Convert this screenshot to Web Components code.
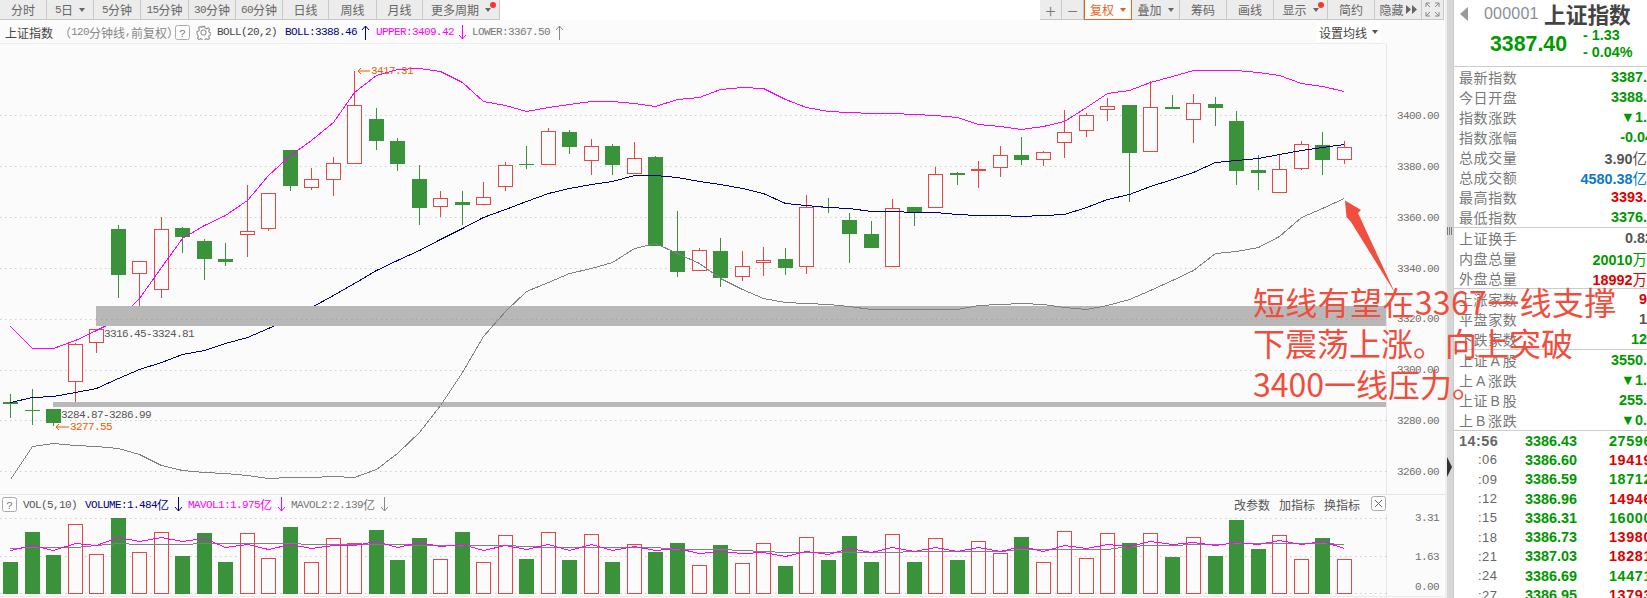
<!DOCTYPE html>
<html lang="zh"><head><meta charset="utf-8"><title>上证指数</title>
<style>html,body{margin:0;padding:0;background:#fff;overflow:hidden}body{font-family:"Noto Sans CJK SC","Liberation Sans",sans-serif}</style>
</head><body>
<tdx-app></tdx-app>
<script>
const CJK='"Noto Sans CJK SC","Liberation Sans",sans-serif';
const mx=t=>t.replace(/[\x21-\x7e]+/g,m=>`<span class="m">${m}</span>`);
const MONO=`.m{font-family:"Liberation Mono",monospace;font-size:11px;letter-spacing:-.6px}`;
function def(name,css,render){
  customElements.define(name,class extends HTMLElement{
    connectedCallback(){
      if(this.shadowRoot)return;
      const s=this.attachShadow({mode:'open'});
      s.innerHTML=`<style>${css}${MONO}</style>`+render(this);
    }
  });
}
/* data: type g/r, bodyTop, bodyBottom, wickTop, wickBottom, volTop */
const K=[
['g',402,404,394,418,562],['g',410,411,389,425,532],['g',409,423,409,426,555],['r',344,382,343,402,524],['r',329,343,329,353,554],
['g',229,275,225,298,518],['r',261,274,261,306,552],['r',229,290,217,298,532],['g',228,237,227,253,556],['g',241,259,239,280,533],
['g',259,262,243,266,562],['r',231,235,185,257,533],['r',193,229,193,231,558],['g',150,186,150,191,527],['r',179,188,168,190,562],
['r',163,180,157,196,538],['r',105,164,71,164,543],['g',119,141,108,150,530],['g',141,164,138,171,560],['g',179,208,165,225,538],
['r',198,207,191,217,559],['g',202,205,191,225,532],['r',197,205,182,205,562],['r',165,187,162,191,535],['g',164,165,146,169,559],
['r',131,165,128,165,532],['g',132,147,130,154,560],['r',146,161,139,175,534],['g',146,165,144,175,562],['r',158,174,142,174,544],
['g',157,246,156,246,552],['g',251,272,211,277,543],['r',250,271,248,271,565],['g',251,278,238,287,545],['r',266,277,251,281,563],
['r',260,263,247,276,543],['g',259,268,248,275,566],['r',207,267,195,274,537],['g',207,208,198,213,560],['g',220,234,213,263,536],
['g',234,248,221,248,562],['r',208,267,199,267,534],['g',207,212,207,226,562],['r',174,208,167,208,538],['g',173,175,172,185,560],
['f',169,171,161,188,541],['r',155,168,146,177,553],['g',155,160,137,165,537],['r',152,160,151,166,562],['r',132,143,110,158,531],
['r',115,131,113,137,558],['r',106,110,98,121,533],['g',105,153,105,202,543],['r',107,152,81,152,533],['g',107,109,95,109,557],
['r',103,120,94,143,537],['g',104,108,97,126,556],['g',121,171,111,185,520],['g',170,173,155,190,549],['r',169,193,154,193,535],
['r',144,169,141,170,559],['g',145,160,132,175,538],['r',147,160,141,164,559]];
const UP=[326,348,348,340,330,319,298,267,238,225,215,200,175,155,140,122,92,75,69,68,71,82,101,105,111,107,104,101,101,103,106,99,97,89,87,88,99,107,111,112,113,113,114,115,117,124,126,129,126,121,107,93,90,82,76,70,70,70,72,75,83,86,91];
const MID=[402,397,396,392,388,378,369,362,354,350,343,337,328,318,307,295,283,270,260,250,239,228,217,209,201,193,188,184,181,175,175,177,181,184,188,193,203,205,207,208,211,211,212,212,214,215,215,216,215,214,207,199,194,186,179,172,162,160,158,154,150,147,144];
const LOW=[479,446,443,445,446,448,454,465,470,472,473,475,478,477,477,476,477,469,453,432,405,372,336,311,291,282,273,268,262,248,243,253,263,278,289,298,302,303,304,306,309,309,309,309,309,305,304,303,304,307,309,305,299,290,280,270,253,251,247,236,217,208,198];
const M1=[550,545,550,543,545,537,541,537,541,538,547,544,549,544,548,545,545,541,547,542,546,544,550,545,549,544,550,544,550,546,550,548,553,551,553,552,556,551,554,548,552,547,551,547,551,547,551,546,551,545,548,544,546,541,544,542,545,542,544,540,544,541,548];
const M2=[548,547,547,547,545,543,544,544,544,543,543,543,543,543,544,544,544,544,544,545,545,545,545,545,546,547,547,547,547,547,547,549,549,549,550,551,552,552,552,552,552,552,551,551,551,551,551,549,549,549,549,549,546,545,545,544,544,543,543,543,543,543,544];
const cx=i=>Math.floor(10.5+21.516*i);
const pts=a=>a.map((y,i)=>`${cx(i)+.5},${y+.5}`).join(' ');
const G='#3a923a',R='#e94545',BG='#fbfbfb';
const grid=(ys)=>ys.map(y=>`<line x1="0" x2="1390" y1="${y}.5" y2="${y}.5" stroke="#cfcfcf" stroke-dasharray="1.5 3.5"/>`).join('');
const candles=()=>K.map((k,i)=>{
  const x=cx(i),[t,a,b,c,d]=k,col=t==='g'?G:R;
  let s=`<line x1="${x+.5}" x2="${x+.5}" y1="${c}" y2="${d}" stroke="${col}"/>`;
  if(t==='r')s+=`<rect x="${x-6.5}" y="${a+.5}" width="14" height="${b-a-1}" fill="${BG}" stroke="${R}"/>`;
  else s+=`<rect x="${x-7}" y="${a}" width="15" height="${b-a}" fill="${col}"/>`;
  return s}).join('');
const vols=()=>K.map((k,i)=>{
  const x=cx(i),t=k[5];
  return k[0]==='g'?`<rect x="${x-7}" y="${t}" width="15" height="${594-t}" fill="${G}"/>`
   :`<rect x="${x-6.5}" y="${t+.5}" width="14" height="${594-t-1}" fill="${BG}" stroke="${R}"/>`}).join('');
const lab=(x,y,t,c='#666')=>`<text x="${x}" y="${y+4}" fill="${c}">${t}</text>`;
const arrowUp=c=>`<svg width="9" height="15" viewBox="0 0 9 15"><path d="M4.5 1v14M1 5l3.5-4L8 5" fill="none" stroke="${c}"/></svg>`;
const arrowDn=c=>`<svg width="9" height="15" viewBox="0 0 9 15"><path d="M4.5 0v14M1 10l3.5 4L8 10" fill="none" stroke="${c}"/></svg>`;
const qbox=`<svg width="15" height="15" viewBox="0 0 15 15"><rect x=".5" y=".5" width="14" height="14" rx="2" fill="#fff" stroke="#aaa"/><text x="7.5" y="11.5" text-anchor="middle" font-size="11" font-family="Liberation Mono" fill="#777">?</text></svg>`;

def('tool-tab',`:host{display:flex;align-items:center;justify-content:center;box-sizing:border-box;height:20px;background:#ececec;border-right:1px solid #c8c8c8;border-bottom:1px solid #c8c8c8;color:#666;font-size:12px;position:relative;white-space:nowrap}
:host([on]){background:#fff;border:1px solid #e8631a;border-top:0;color:#e8631a}
.big{font:300 19px/18px "Noto Sans CJK SC",sans-serif;color:#777}
.c{display:inline-block;width:0;height:0;border:3px solid transparent;border-top:4px solid currentColor;border-bottom:0;margin-left:6px}
.d{position:absolute;width:6px;height:6px;border-radius:50%;background:#f33;top:2px;right:3px}`,
 e=>{const t=e.getAttribute('t')||'';const isBig=t==='+'||t==='−';
 return `${isBig?`<span class="big">${t}</span>`:mx(t)}<slot></slot>${e.hasAttribute('c')?'<i class="c"></i>':''}${e.hasAttribute('d')?'<i class="d"></i>':''}`});

def('tool-bar',`:host{display:flex;justify-content:space-between;height:20px;width:1444px;background:#fff}
.g{display:flex}`,
 ()=>{
  const L=[['分时',47],['5日',47,1],['5分钟',47],['15分钟',48],['30分钟',47],['60分钟',47],['日线',46],['周线',48],['月线',46],['更多周期',77,1,1]];
  const Rr=[['+',22],['−',22],['复权',48,1,0,1],['叠加',48,1],['筹码',47],['画线',47],['显示',54,1,1],['简约',47],['隐藏',47],['',22]];
  const t=([s,w,c,d,o])=>{
    let inner='';
    if(s==='隐藏')inner=`<svg width="11" height="9" viewBox="0 0 11 9" style="margin-left:2px"><path d="M0 0l5 4.5L0 9zM6 0l5 4.5L6 9z" fill="#666"/></svg>`;
    if(s==='')inner=`<svg width="15" height="15" viewBox="0 0 15 15" fill="none" stroke="#888"><path d="M1 5V1h4M1 1l4 4M14 5V1h-4M14 1l-4 4M1 10v4h4M1 14l4-4M14 10v4h-4M14 14l-4-4"/></svg>`;
    return `<tool-tab style="width:${w}px" t="${s}"${c?' c':''}${d?' d':''}${o?' on':''}>${inner}</tool-tab>`};
  return `<div class="g">${L.map(t).join('')}</div><div class="g">${Rr.map(t).join('')}</div>`;
 });

def('chart-header',`:host{display:flex;align-items:center;box-sizing:border-box;height:24px;padding:2px 0 1px 5px;width:1386px;border-bottom:1px solid #eee;font-size:12px;white-space:nowrap;color:#444;background:${BG}}
span.s{display:inline-flex;align-items:center}svg{display:block}.r{margin-left:auto;margin-right:5px;background:#fff;padding:0 3px;display:flex;align-items:center;height:20px}
.c{display:inline-block;width:0;height:0;border:3px solid transparent;border-top:4px solid #555;border-bottom:0;margin-left:5px}`,
 ()=>`<span class="s" style="width:54px">上证指数</span><span class="s" style="color:#888;width:116px">${mx('（120分钟线, 前复权）')}</span>
 <span class="s" style="width:21px">${qbox}</span>
 <span class="s" style="width:21px;background:#fff"><svg width="15" height="15" viewBox="0 0 15 15"><path fill="none" stroke="#999" stroke-width="1.3" d="M6.3 1h2.4l.4 1.9 1.6.7 1.7-1 1.6 1.7-1 1.6.7 1.6 1.9.4v2.2l-1.9.4-.7 1.6 1 1.7-1.6 1.6-1.7-1-1.6.7-.4 1.9H6.3l-.4-1.9-1.6-.7-1.7 1-1.6-1.6 1-1.7-.7-1.6L.4 8.700V6.500l1.900-.4.7-1.600-1-1.700 1.600-1.600 1.700 1 1.600-.7z" transform="translate(.6 .4) scale(.93)"/><circle cx="7.5" cy="7.500" r="2.500" fill="none" stroke="#999" stroke-width="1.200"/></svg></span>
 <span class="s" style="width:68px">${mx('BOLL(20,2)')}</span>
 <span class="s" style="color:#000080;width:76px">${mx('BOLL:3388.46')}</span><span class="s" style="width:15px">${arrowUp('#000080')}</span>
 <span class="s" style="color:#f0f;width:82px">${mx('UPPER:3409.42')}</span><span class="s" style="width:14px">${arrowDn('#f0f')}</span>
 <span class="s" style="color:#777;width:83px">${mx('LOWER:3367.50')}</span>${arrowUp('#888')}
 <span class="r">设置均线<i class="c"></i></span>`);

def('kline-chart',`:host{display:block;height:450px;width:1445px;background:${BG}}svg{display:block;font-family:"Liberation Mono",monospace;font-size:11px;letter-spacing:-.6px}`,
 ()=>`<svg width="1445" height="450" viewBox="0 44 1445 450">
 <line x1="1386.5" x2="1386.5" y1="44" y2="494" stroke="#e6e6e6"/>
 ${grid([115,166,217,268,319,370,420,471])}
 <g shape-rendering="crispEdges">${candles()}
 <polyline points="${pts(UP)}" fill="none" stroke="#f0f"/>
 <polyline points="${pts(MID)}" fill="none" stroke="#000080"/>
 <rect x="96" y="306" width="1290" height="20" fill="#b8b8b8"/>
 <rect x="53" y="402" width="1333" height="5" fill="#b8b8b8"/>
 <polyline points="${pts(LOW)}" fill="none" stroke="#808080"/></g>
 <line x1="96" x2="1386" y1="319.500" y2="319.500" stroke="#a8a8a8" stroke-dasharray="1.500 3.500"/>
 ${lab(104,333,'3316.45-3324.81','#555')}${lab(61,414,'3284.87-3286.99','#555')}
 ${lab(371,70,'3417.31','#f05a00')}${lab(70,426,'3277.55','#f05a00')}
 <path d="M370 71h-12M361 68l-3 3 3 3M69 427H56M59 424l-3 3 3 3" fill="none" stroke="#f05a00"/>
 ${[[115,'3400.00'],[166,'3380.00'],[217,'3360.00'],[268,'3340.00'],[318,'3320.00'],[369,'3300.00'],[420,'3280.00'],[471,'3260.00']].map(([y,t])=>lab(1397,y,t,'#707070')).join('')}
 </svg>`);

def('vol-header',`:host{display:flex;align-items:center;box-sizing:border-box;height:20px;padding:0 0 0 2px;width:1445px;border-top:1px solid #e6e6e6;background:${BG};font-size:12px;white-space:nowrap;color:#555}
.s{display:inline-flex;align-items:center}.r{margin-left:auto;display:flex;gap:9px;padding-right:85px;position:relative}
.x{position:absolute;left:137px;top:0}svg{display:block}`,
 ()=>`<span class="s" style="width:21px">${qbox}</span><span class="s" style="width:62px">${mx('VOL(5,10)')}</span>
 <span class="s" style="color:#000080;width:89px">${mx('VOLUME:1.484亿')}</span><span class="s" style="width:14px">${arrowDn('#000080')}</span>
 <span class="s" style="color:#f0f;width:89px">${mx('MAVOL1:1.975亿')}</span><span class="s" style="width:14px">${arrowDn('#f0f')}</span>
 <span class="s" style="color:#777;width:89px">${mx('MAVOL2:2.139亿')}</span>${arrowDn('#888')}
 <span class="r"><span>改参数</span><span>加指标</span><span>换指标</span><svg class="x" width="15" height="15" viewBox="0 0 15 15"><rect x=".5" y=".5" width="14" height="14" rx="2" fill="#fff" stroke="#aaa"/><path d="M4 4l7 7M11 4l-7 7" stroke="#666" fill="none"/></svg></span>`);

def('vol-chart',`:host{display:block;height:84px;width:1445px;background:${BG}}svg{display:block;font-family:"Liberation Mono",monospace;font-size:11px;letter-spacing:-.6px}`,
 ()=>`<svg width="1445" height="84" viewBox="0 514 1445 84">
 <line x1="1386.5" x2="1386.5" y1="514" y2="598" stroke="#e6e6e6"/>
 ${grid([518,556,593])}
 <g shape-rendering="crispEdges">${vols()}
 <polyline points="${pts(M2)}" fill="none" stroke="#808080"/>
 <polyline points="${pts(M1)}" fill="none" stroke="#f0f"/></g>
 <line x1="0" x2="1445" y1="596.500" y2="596.500" stroke="#ececec"/>
 ${lab(1415,517,'3.31','#707070')}${lab(1415,556,'1.63','#707070')}${lab(1415,586,'0.00','#707070')}
 </svg>`);

def('split-bar',`:host{display:flex;flex-direction:column;align-items:center;width:8px;height:598px;background:linear-gradient(90deg,#efefef 0,#efefef 2px,#d6d6d6 2px);position:relative}
.g{position:absolute;left:2px;top:227px;width:5px;height:8px;background:repeating-linear-gradient(90deg,#777 0 1px,#ddd 1px 2px)}
svg{position:absolute;left:2px;top:457px}`,
 ()=>`<i class="g"></i><svg width="5" height="20" viewBox="0 0 5 20"><path d="M0 0l5 10-5 10z" fill="#333"/></svg>`);

const vhtml=v=>v.replace(/[亿万]/g,m=>`<span style="font-weight:400;font-family:'Noto Sans CJK SC'">${m}</span>`);
const khtml=k=>k.replace(/[AB]/g,m=>`<span style="display:inline-block;width:14.5px;text-align:center;font-family:'Liberation Sans'">${m}</span>`);
def('quote-row',`:host{display:flex;justify-content:space-between;align-items:center;height:20px;padding-left:5px;font-size:14px;letter-spacing:.6px;color:#777;white-space:nowrap;overflow:hidden}
b{font:bold 14.4px "Liberation Sans","Noto Sans CJK SC",sans-serif;letter-spacing:0}`,
 e=>`<span>${khtml(e.getAttribute('k'))}</span><b style="color:${e.getAttribute('c')};margin-right:${e.getAttribute('o')||0}px">${vhtml(e.getAttribute('v'))}</b>`);

def('tick-row',`:host{display:grid;grid-template-columns:66px 84px 40px;align-items:center;height:19.3px;padding-left:5px;white-space:nowrap;overflow:hidden;font:bold 14.4px "Liberation Sans",sans-serif}
.t{color:#666;font-weight:400;font-size:13px;padding-left:19px;letter-spacing:.5px}.t.h{padding:0;font-weight:700;font-size:14.4px}`,
 e=>{const t=e.getAttribute('t');return `<span class="t${t[0]===':'?'':' h'}">${t}</span><span style="color:#090">${e.getAttribute('p')}</span><span style="color:${e.getAttribute('c')};letter-spacing:.6px">${e.getAttribute('v')}</span>`});

const GR='#009900',RD='#dd0000';
def('side-panel',`:host{display:block;box-sizing:border-box;width:194px;height:598px;border-left:1px solid #ccc;background:#fff;overflow:hidden}
.top{height:67px;box-sizing:border-box;border-bottom:1px solid #ccc}
.a{display:flex;align-items:center;height:27px;padding-left:6px}
.a svg{margin-right:16px}.code{font:16px "Liberation Sans",sans-serif;color:#8a8f96;width:60px;letter-spacing:.2px}
.name{font:700 21.700px "Noto Sans CJK SC",sans-serif;color:#444;line-height:27px}
.b{display:flex;padding-left:36px;color:${GR};font-family:"Liberation Sans",sans-serif;font-weight:700;margin-top:0}
.p{font-size:21.300px;width:93px;line-height:34px}.d{font-size:14.400px;line-height:17px}
.sec{border-bottom:1px solid #ccc}.sec.n{border:0}`,
 ()=>{
  const q=a=>a.map(([k,v,c,o])=>`<quote-row k="${k}" v="${v}" c="${c}" o="${o||0}"></quote-row>`).join('');
  const T=[['14:56','3386.43','27596',GR],[':06','3386.60','19419',RD],[':09','3386.59','18712',GR],[':12','3386.96','14946',RD],[':15','3386.31','16000',GR],[':18','3386.73','13980',RD],[':21','3387.03','18281',RD],[':24','3386.69','14471',GR],[':27','3386.95','13793',RD]];
  return `<div class="top"><div class="a"><svg width="8" height="14" viewBox="0 0 8 14"><path d="M8 0L0 7l8 7z" fill="#999"/></svg><span class="code">000001</span><span class="name">上证指数</span></div>
  <div class="b"><span class="p">3387.40</span><span class="d">- 1.33<br>- 0.04%</span></div></div>
  <div class="sec">${q([['最新指数','3387.',GR],['今日开盘','3388.',GR],['指数涨跌','▼1.',GR],['指数涨幅','-0.04',GR,-6],['总成交量','3.90亿','#555'],['总成交额','4580.38亿','#0a78d2'],['最高指数','3393.',RD],['最低指数','3376.',GR]])}</div>
  <div class="sec">${q([['上证换手','0.82','#555',-6],['内盘总量','20010万',GR],['外盘总量','18992万',RD]])}</div>
  <div class="sec">${q([['上涨家数','9',RD],['平盘家数','1','#555'],['下跌家数','12',GR]])}</div>
  <div class="sec">${q([['上证A股','3550.',GR],['上A涨跌','▼1.',GR],['上证B股','255.',GR],['上B涨跌','▼0.',GR]])}</div>
  <div class="sec n">${T.map(([t,p,v,c])=>`<tick-row t="${t}" p="${p}" v="${v}" c="${c}"></tick-row>`).join('')}</div>`;
 });

def('note-overlay',`:host{position:absolute;left:0;top:0;width:1647px;height:598px;pointer-events:none;display:block}
svg{position:absolute;left:0;top:0}
.t{position:absolute;left:1253px;top:281px;font:400 32px/41px "Noto Sans CJK SC",sans-serif;color:#f24c3c;white-space:nowrap}
.w{letter-spacing:.35px}`,
 ()=>`<svg width="1647" height="598"><polygon points="1345,200.500 1361,210 1358,213 1395,293 1351,222 1346.500,217" fill="#f04e3e"/></svg>
 <div class="t"><span class="w">短线有望在3367一线支撑</span><br>下震荡上涨。向上突破<br>3400一线压力。</div>`);

def('tdx-app',`:host{display:grid;grid-template-columns:1445px 8px 194px;width:1647px;height:598px;overflow:hidden;position:relative;font-family:${CJK}}
.l{display:flex;flex-direction:column;width:1445px;height:598px;background:${BG};overflow:hidden}`,
 ()=>`<div class="l"><tool-bar></tool-bar><chart-header></chart-header><kline-chart></kline-chart><vol-header></vol-header><vol-chart></vol-chart></div>
 <split-bar></split-bar><side-panel></side-panel><note-overlay></note-overlay>`);
</script>
</body></html>
